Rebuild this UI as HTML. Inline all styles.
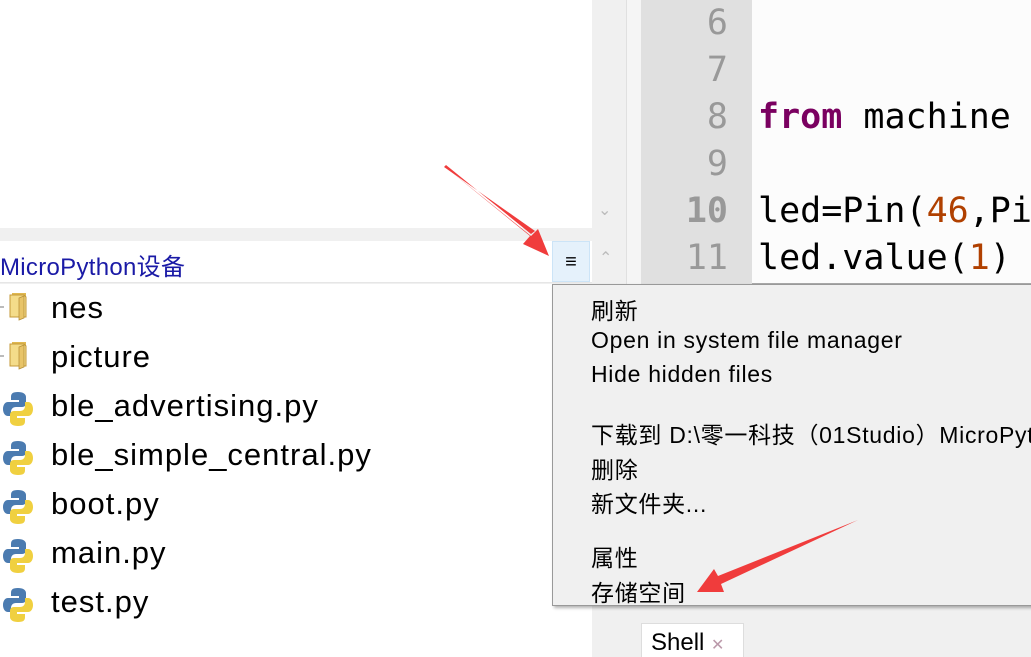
<!DOCTYPE html>
<html><head><meta charset="utf-8"><style>
*{margin:0;padding:0;box-sizing:border-box}
body{width:1031px;height:657px;overflow:hidden;position:relative;background:#f0f0f0;font-family:"Liberation Sans","Noto Sans CJK SC",sans-serif}
.abs{position:absolute}
.code{font-family:"DejaVu Sans Mono","Liberation Mono",monospace;font-size:35px;white-space:pre}
.ln{position:absolute;right:0;width:100px;text-align:right;color:#999;font-family:"DejaVu Sans Mono",monospace;font-size:35px}
.file{position:absolute;left:51px;font-size:31px;letter-spacing:1px;color:#000;white-space:nowrap}
.mi{position:absolute;left:591px;font-size:23px;letter-spacing:0.7px;color:#000;white-space:nowrap}
</style></head><body>
<div class="abs" style="left:0;top:0;width:592px;height:228px;background:#fff"></div>
<div class="abs" style="left:0;top:228px;width:592px;height:13px;background:#f0f0f0"></div>
<div class="abs" style="left:0;top:241px;width:592px;height:42px;background:#fff;border-bottom:1px solid #e6e6e6"></div>
<div class="abs" style="left:0;top:247px;font-size:24px;letter-spacing:0.3px;color:#1a1aa6;white-space:nowrap">MicroPython设备</div>
<div class="abs" style="left:552px;top:241px;width:38px;height:41px;background:#e5f1fb;border:1px solid #cce4f7;text-align:center;line-height:40px;font-size:20px;font-weight:bold">≡</div>
<div class="abs" style="left:0;top:284px;width:592px;height:373px;background:#fff"></div>
<div class="abs" style="left:592px;top:0;width:34px;height:284px;background:#f0f0f0"></div>
<div class="abs" style="left:598px;top:200px;color:#bbb;font-size:16px">⌄</div>
<div class="abs" style="left:599px;top:248px;color:#bbb;font-size:16px">⌃</div>
<div class="abs" style="left:626px;top:0;width:15px;height:284px;background:#f5f5f5;border-left:1px solid #e0e0e0"></div>
<div class="abs" style="left:641px;top:0;width:111px;height:284px;background:#e0e0e0"></div>
<div class="abs" style="left:752px;top:0;width:279px;height:284px;background:#fcfcfc;border-bottom:1px solid #aaa"></div>
<div class="ln" style="left:628px;top:3px">6</div>
<div class="ln" style="left:628px;top:50px">7</div>
<div class="ln" style="left:628px;top:97px">8</div>
<div class="ln" style="left:628px;top:144px">9</div>
<div class="ln" style="left:628px;top:191px;font-weight:bold">10</div>
<div class="ln" style="left:628px;top:238px">11</div>
<div class="abs code" style="left:758px;top:-16px;color:#0a6e0a">'''</div>
<div class="abs code" style="left:758px;top:97px"><b style="color:#7a0060">from</b> machine</div>
<div class="abs code" style="left:758px;top:191px">led=Pin(<span style="color:#b04000">46</span>,Pi</div>
<div class="abs code" style="left:758px;top:238px">led.value(<span style="color:#b04000">1</span>)</div>
<div class="abs" style="left:641px;top:623px;width:103px;height:34px;background:#fff;border:1px solid #ddd;border-bottom:none"></div>
<div class="abs" style="left:651px;top:629px;font-size:24px">Shell <span style="color:#b9a;font-size:16px">✕</span></div>
<svg class="abs" style="left:0;top:284px" width="48" height="340">
<g>
<path d="M0 22h4v2H0z" fill="#bbb"/><path d="M0 71h4v2H0z" fill="#bbb"/>
<path d="M12 9h14v22H12z" fill="#e0b850"/><path d="M10 11h14l2 2v20H10z" fill="#f4dc8a" stroke="#c49a3a"/>
<path d="M19 14l5 -2v22l-5 2z" fill="#e8c468" stroke="#b8913a" stroke-width="0.8"/>
<path d="M12 58h14v22H12z" fill="#e0b850"/><path d="M10 60h14l2 2v20H10z" fill="#f4dc8a" stroke="#c49a3a"/>
<path d="M19 63l5 -2v22l-5 2z" fill="#e8c468" stroke="#b8913a" stroke-width="0.8"/>
</g>
<defs>
<g id="py">
<path d="M18 106c-6 0-7 2-7 5v3h8v2H8c-3 0-5 3-5 7s2 7 5 7h3v-4c0-3 2-5 5-5h6c3 0 4-2 4-4v-6c0-3-3-5-8-5z" fill="#4b7bb0"/>
<path d="M18 140c6 0 7-2 7-5v-3h-8v-2h11c3 0 5-3 5-7s-2-7-5-7h-3v4c0 3-2 5-5 5h-6c-3 0-4 2-4 4v6c0 3 3 5 8 5z" fill="#f0d040"/>
</g></defs>
<use href="#py" y="2"/><use href="#py" y="51"/><use href="#py" y="100"/><use href="#py" y="149"/><use href="#py" y="198"/>
</svg>
<div class="file" style="top:290px">nes</div>
<div class="file" style="top:339px">picture</div>
<div class="file" style="top:388px">ble_advertising.py</div>
<div class="file" style="top:437px">ble_simple_central.py</div>
<div class="file" style="top:486px">boot.py</div>
<div class="file" style="top:535px">main.py</div>
<div class="file" style="top:584px">test.py</div>
<div class="abs" style="left:552px;top:284px;width:490px;height:322px;background:#f0f0f0;border:1px solid #999;box-shadow:2px 2px 3px rgba(0,0,0,.3)"></div>
<div class="mi" style="top:292px">刷新</div>
<div class="mi" style="top:327px">Open in system file manager</div>
<div class="mi" style="top:361px">Hide hidden files</div>
<div class="mi" style="top:416px">下载到 D:\零一科技（01Studio）MicroPython</div>
<div class="mi" style="top:451px">删除</div>
<div class="mi" style="top:485px">新文件夹...</div>
<div class="mi" style="top:539px">属性</div>
<div class="mi" style="top:574px">存储空间</div>
<svg class="abs" style="left:0;top:0" width="1031" height="657">
<polygon points="444,166 530,236 523,244 549,256 538,229 531,236" fill="#f03c3c"/>
<polygon points="446,165 531,234 535,231 444,167" fill="#f03c3c"/>
<polygon points="858,520 718,576 714,569 697,592 724,592 721,584" fill="#f03c3c"/>
</svg>
</body></html>
